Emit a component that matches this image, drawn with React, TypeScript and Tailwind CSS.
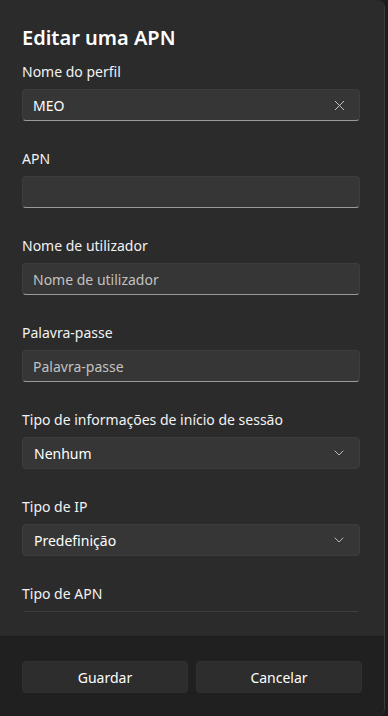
import { ChevronDown, X } from "lucide-react";

const font = { fontFamily: '"Noto Sans", "Open Sans", sans-serif' };

function Label({ children }: { children: React.ReactNode }) {
  return <div className="h-5 text-[14px] leading-5 text-[#f2f2f2]">{children}</div>;
}

function TextBox({ value, placeholder, clear }: { value?: string; placeholder?: string; clear?: boolean }) {
  return (
    <div className="mt-[7px] flex h-8 items-center rounded-[4px] border border-[#3d3d3d] border-b-[#9a9a9a] bg-[#363636] pl-[10px] pr-[11px]">
      <span className={`flex-1 text-[14px] ${value ? "text-white" : "text-[#c2c2c2]"}`}>{value || placeholder}</span>
      {clear && <X size={17} strokeWidth={1.3} className="text-[#d0d0d0]" />}
    </div>
  );
}

function Select({ value }: { value: string }) {
  return (
    <div className="mt-[7px] flex h-8 items-center rounded-[4px] border border-[#3d3d3d] bg-[#363636] pl-[11px] pr-3">
      <span className="flex-1 text-[14px] text-white">{value}</span>
      <ChevronDown size={16} strokeWidth={1.3} className="text-[#cfcfcf]" />
    </div>
  );
}

export default function App() {
  return (
    <div className="h-[716px] w-[388px] overflow-hidden bg-[#1c1c1c]" style={font}>
      <div className="flex h-full w-[385px] flex-col overflow-hidden rounded-r-lg border-r border-[#3a3a3a]">
        <div className="flex-1 overflow-hidden bg-[#2b2b2b] pl-[22px] pr-[24px] pt-[24px]">
          <h1 className="h-7 text-[20px] font-semibold leading-7 text-white">Editar uma APN</h1>
          <div className="mt-[10px] flex flex-col gap-[28px]">
            <div>
              <Label>Nome do perfil</Label>
              <TextBox value="MEO" clear />
            </div>
            <div>
              <Label>APN</Label>
              <TextBox />
            </div>
            <div>
              <Label>Nome de utilizador</Label>
              <TextBox placeholder="Nome de utilizador" />
            </div>
            <div>
              <Label>Palavra-passe</Label>
              <TextBox placeholder="Palavra-passe" />
            </div>
            <div>
              <Label>Tipo de informações de início de sessão</Label>
              <Select value="Nenhum" />
            </div>
            <div>
              <Label>Tipo de IP</Label>
              <Select value="Predefinição" />
            </div>
            <div>
              <Label>Tipo de APN</Label>
              <div className="mx-[2px] mt-[7px] h-8 border-t border-[#3d3d3d]" />
            </div>
          </div>
        </div>
        <div className="flex h-[80px] shrink-0 gap-2 border-t border-[#1d1d1d] bg-[#202020] px-[22px] pt-[24px]">
          <button className="h-8 flex-1 rounded-[4px] border border-[#303030] bg-[#2d2d2d] text-[14px] text-white">Guardar</button>
          <button className="h-8 flex-1 rounded-[4px] border border-[#303030] bg-[#2d2d2d] text-[14px] text-white">Cancelar</button>
        </div>
      </div>
    </div>
  );
}
